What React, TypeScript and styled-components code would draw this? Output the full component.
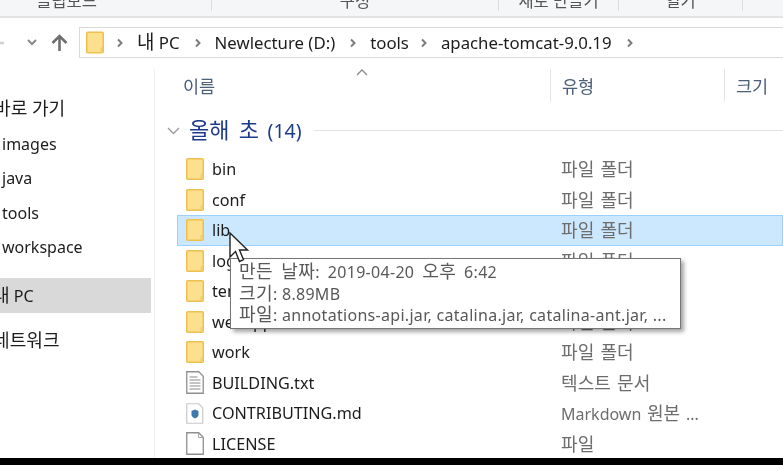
import React from "react";
import styled, { createGlobalStyle } from "styled-components";

const FONT = `"Noto Sans", "Noto Sans CJK KR", sans-serif`;

const Global = createGlobalStyle`
  html, body { margin: 0; padding: 0; background: #fff; }
  body { font-family: ${FONT}; }
`;

const Page = styled.div`
  position: relative;
  width: 783px;
  height: 465px;
  overflow: hidden;
  display: flex;
  flex-direction: column;
  background: #fff;
  color: #1c1c1c;
  filter: blur(0.3px);
`;

const Ribbon = styled.div`
  height: 16px;
  flex: none;
  display: grid;
  grid-template-columns: 212px 287px 120px 124px 40px;
  background: #f5f6f7;
  border-bottom: 2px solid #e2e3e4;
`;

const RibbonGroup = styled.div<{ $inset?: number }>`
  height: 11px;
  overflow: hidden;
  display: flex;
  justify-content: center;
  align-items: flex-end;
  font-size: 16.5px;
  line-height: 20px;
  color: #555;
  border-right: 1px solid #dcdddf;
  padding-right: ${(p) => p.$inset ?? 0}px;
  box-sizing: border-box;
`;

const NavBar = styled.div`
  height: 31px;
  margin-top: 9px;
  flex: none;
  display: flex;
  align-items: center;
`;

const NavButtons = styled.div`
  width: 79px;
  flex: none;
  display: flex;
  align-items: center;
  padding-left: 25px;
  gap: 14px;
  box-sizing: border-box;
  overflow: hidden;
`;

const BackArrow = styled.svg`
  margin-left: -37px;
  margin-right: 8px;
`;

const AddressBar = styled.div`
  flex: 1;
  height: 100%;
  box-sizing: border-box;
  border: 1px solid #d9d9d9;
  border-right: none;
  display: flex;
  align-items: center;
  padding-left: 6px;
  font-size: 16.8px;
  white-space: nowrap;
`;

const Crumb = styled.span<{ $left?: number; $right?: number }>`
  display: flex;
  margin: 0 ${(p) => p.$right ?? 13}px 0 ${(p) => p.$left ?? 13}px;
`;

const Body = styled.div`
  flex: 1;
  min-height: 0;
  display: grid;
  grid-template-columns: 155px 1fr;
  padding-top: 11px;
`;

const Sidebar = styled.div`
  border-right: 1px solid #f0f0f0;
  overflow: hidden;
  padding-top: 20px;
  display: flex;
  flex-direction: column;
`;

const SideItem = styled.div<{ $active?: boolean; $h?: number; $top?: number }>`
  height: ${(p) => p.$h ?? 34.5}px;
  margin-top: ${(p) => p.$top ?? 0}px;
  width: 151px;
  flex: none;
  display: flex;
  align-items: center;
  padding-left: 2px;
  box-sizing: border-box;
  font-size: 16px;
  white-space: nowrap;
  background: ${(p) => (p.$active ? "#d9d9d9" : "transparent")};
`;

const ClipLead = styled.span<{ $cut: number }>`
  margin-left: -${(p) => p.$cut}px;
  padding-top: 2px;
`;

const Main = styled.div`
  position: relative;
  min-width: 0;
`;

const HeaderRow = styled.div`
  height: 33px;
  display: grid;
  grid-template-columns: 396px 174px 1fr;
  font-size: 17.5px;
  color: #4c607a;
`;

const HeaderCell = styled.div<{ $pad: number }>`
  display: flex;
  align-items: center;
  padding-left: ${(p) => p.$pad}px;
  border-right: 1px solid #e5e5e5;
  box-sizing: border-box;
  &:last-child { border-right: none; }
`;

const SortCaret = styled.svg`
  position: absolute;
  left: 201px;
  top: 0;
`;

const GroupHeader = styled.div`
  height: 29px;
  margin-top: 14px;
  display: flex;
  align-items: center;
  padding-left: 12px;
  gap: 9px;
  font-size: 19.5px;
  word-spacing: 3.5px;
  color: #1e3a8a;
  white-space: nowrap;
`;

const GroupLine = styled.div`
  flex: 1;
  height: 1px;
  margin-left: 3px;
  background: #e2e2e2;
`;

const Rows = styled.div`
  margin-top: 9px;
  margin-left: 22px;
`;

const Row = styled.div<{ $selected?: boolean }>`
  height: 30.5px;
  box-sizing: border-box;
  display: grid;
  grid-template-columns: 384px 1fr;
  align-items: center;
  font-size: 16.2px;
  white-space: nowrap;
  background: ${(p) => (p.$selected ? "#cce8ff" : "transparent")};
  box-shadow: ${(p) => (p.$selected ? "inset 0 0 0 1px #99d1ff" : "none")};
`;

const NameCell = styled.div`
  display: flex;
  align-items: center;
  padding-left: 9px;
  gap: 8px;
`;

const TypeCell = styled.div`
  color: #6d6d6d;
  font-size: 16px;
  word-spacing: 1.5px;
  padding-top: 2px;
`;

const Tooltip = styled.div`
  position: absolute;
  left: 230px;
  top: 258px;
  width: 451px;
  height: 71px;
  box-sizing: border-box;
  background: #fff;
  border: 1px solid #767676;
  box-shadow: 3px 3px 4px rgba(0, 0, 0, 0.35);
  padding: 3px 8px 0;
  font-size: 16px;
  letter-spacing: 0.3px;
  line-height: 21.5px;
  color: #585858;
  white-space: nowrap;
`;

const TooltipLine = styled.div<{ $wide?: boolean }>`
  word-spacing: ${(p) => (p.$wide ? 3.5 : 0)}px;
`;

const Cursor = styled.svg`
  position: absolute;
  left: 229px;
  top: 232px;
`;

const Footer = styled.div`
  height: 7px;
  flex: none;
  background: #000;
`;

// the reference's Korean glyphs run larger than its latin text
const Ko = styled.span`
  font-size: 1.13em;
  line-height: 1;
`;

const Mixed = ({ text }: { text: string }) => (
  <>
    {text.split(/([\uac00-\ud7a3]+(?: [\uac00-\ud7a3]+)*)/).map((part, i) =>
      i % 2 ? <Ko key={i}>{part}</Ko> : part
    )}
  </>
);

const FolderIcon = ({ w = 18, h = 22 }: { w?: number; h?: number }) => (
  <svg width={w} height={h} viewBox="0 0 18 22" style={{ flex: "none" }}>
    <rect x="0.75" y="0.75" width="16.5" height="20.5" rx="1" fill="#fde08e" stroke="#eec04f" strokeWidth="1.5" />
    <path d="M15.2 21v-4.5q.8-1.5 1.6 0V21" fill="#fff3c9" stroke="#eec04f" />
  </svg>
);

const TextIcon = () => (
  <svg width="18" height="23" viewBox="0 0 18 23" style={{ flex: "none" }}>
    <path d="M.75.75h12l4.5 4.5v17H.75z" fill="#fff" stroke="#8f8f8f" strokeWidth="1.3" />
    <path d="M3.5 6h8M3.5 9h11M3.5 12h11M3.5 15h11M3.5 18h11" stroke="#8c8c8c" strokeWidth="1.1" />
  </svg>
);

const MdIcon = () => (
  <svg width="18" height="21" viewBox="0 0 18 21" style={{ flex: "none" }}>
    <path d="M.75.75h12l4 4v15.5h-16z" fill="#fff" stroke="#c9c9c9" strokeWidth="1.2" />
    <path d="M5.5 8l3.5-1.5L12.5 8v3.5q0 2.5-3.5 4-3.5-1.5-3.5-4z" fill="#3f78ab" />
  </svg>
);

const BlankIcon = () => (
  <svg width="18" height="23" viewBox="0 0 18 23" style={{ flex: "none" }}>
    <path d="M.75.75h12l4.5 4.5v17H.75z" fill="#fff" stroke="#8f8f8f" strokeWidth="1.3" />
    <path d="M12.5 1v4.5H17" fill="none" stroke="#a8a8a8" />
  </svg>
);

const Chevron = () => (
  <svg width="8" height="10" viewBox="0 0 8 10" style={{ flex: "none" }}>
    <path d="M2 1.5L5.5 5 2 8.5" fill="none" stroke="#7c7c7c" strokeWidth="2" />
  </svg>
);

const rows = [
  { name: "bin", type: "파일 폴더", icon: <FolderIcon /> },
  { name: "conf", type: "파일 폴더", icon: <FolderIcon /> },
  { name: "lib", type: "파일 폴더", icon: <FolderIcon />, selected: true },
  { name: "logs", type: "파일 폴더", icon: <FolderIcon /> },
  { name: "temp", type: "파일 폴더", icon: <FolderIcon /> },
  { name: "webapps", type: "파일 폴더", icon: <FolderIcon /> },
  { name: "work", type: "파일 폴더", icon: <FolderIcon /> },
  { name: "BUILDING.txt", type: "텍스트 문서", icon: <TextIcon /> },
  { name: "CONTRIBUTING.md", type: "Markdown 원본 ...", icon: <MdIcon /> },
  { name: "LICENSE", type: "파일", icon: <BlankIcon /> },
];

const App = () => (
  <Page>
    <Global />
    <Ribbon>
      <RibbonGroup $inset={78}>클립보드</RibbonGroup>
      <RibbonGroup>구성</RibbonGroup>
      <RibbonGroup>새로 만들기</RibbonGroup>
      <RibbonGroup>열기</RibbonGroup>
    </Ribbon>
    <NavBar>
      <NavButtons>
        <BackArrow width="17" height="18" viewBox="0 0 17 18">
          <path d="M16 9H2M9 2L2 9l7 7" fill="none" stroke="#d0d0d0" strokeWidth="2.6" />
        </BackArrow>
        <svg width="10" height="7" viewBox="0 0 10 7">
          <path d="M1 1l4 4 4-4" fill="none" stroke="#8a8a8a" strokeWidth="2" />
        </svg>
        <svg width="17" height="18" viewBox="0 0 17 18">
          <path d="M8.5 17V2M1.5 9l7-7 7 7" fill="none" stroke="#6f6f6f" strokeWidth="2.6" />
        </svg>
      </NavButtons>
      <AddressBar>
        <FolderIcon w={18} h={23} />
        <Crumb $left={12} $right={13}>
          <Chevron />
        </Crumb>
        <span>
          <Mixed text="내 PC" />
        </span>
        <Crumb $left={14}>
          <Chevron />
        </Crumb>
        <span>Newlecture (D:)</span>
        <Crumb $left={14}>
          <Chevron />
        </Crumb>
        <span>tools</span>
        <Crumb $left={11}>
          <Chevron />
        </Crumb>
        <span>apache-tomcat-9.0.19</span>
        <Crumb $left={14}>
          <Chevron />
        </Crumb>
      </AddressBar>
    </NavBar>
    <Body>
      <Sidebar>
        <SideItem $h={38}>
          <ClipLead $cut={8}>
            <Mixed text="바로 가기" />
          </ClipLead>
        </SideItem>
        <SideItem $h={34}>images</SideItem>
        <SideItem>java</SideItem>
        <SideItem>tools</SideItem>
        <SideItem>workspace</SideItem>
        <SideItem $active $h={35} $top={13}>
          <ClipLead $cut={9}>
            <Mixed text="내 PC" />
          </ClipLead>
        </SideItem>
        <SideItem $h={54}>
          <ClipLead $cut={9}>
            <Mixed text="네트워크" />
          </ClipLead>
        </SideItem>
      </Sidebar>
      <Main>
        <HeaderRow>
          <HeaderCell $pad={28}>이름</HeaderCell>
          <HeaderCell $pad={11}>유형</HeaderCell>
          <HeaderCell $pad={11}>크기</HeaderCell>
        </HeaderRow>
        <SortCaret width="12" height="7" viewBox="0 0 12 7">
          <path d="M1 6l5-5 5 5" fill="none" stroke="#8a8a8a" strokeWidth="1.3" />
        </SortCaret>
        <GroupHeader>
          <svg width="13" height="8" viewBox="0 0 13 8">
            <path d="M1 1l5.5 5.5L12 1" fill="none" stroke="#9a9a9a" strokeWidth="1.3" />
          </svg>
          <span>
            <Mixed text="올해 초" /> (14)
          </span>
          <GroupLine />
        </GroupHeader>
        <Rows>
          {rows.map((r) => (
            <Row key={r.name} $selected={r.selected}>
              <NameCell>
                {r.icon}
                <span>{r.name}</span>
              </NameCell>
              <TypeCell>
                <Mixed text={r.type} />
              </TypeCell>
            </Row>
          ))}
        </Rows>
      </Main>
    </Body>
    <Footer />
    <Tooltip>
      <TooltipLine $wide>
        <Mixed text="만든 날짜: 2019-04-20 오후 6:42" />
      </TooltipLine>
      <TooltipLine>
        <Mixed text="크기: 8.89MB" />
      </TooltipLine>
      <TooltipLine>
        <Mixed text="파일: annotations-api.jar, catalina.jar, catalina-ant.jar, ..." />
      </TooltipLine>
    </Tooltip>
    <Cursor width="20" height="34" viewBox="0 0 20 34">
      <path d="M1 1v24l5.5-5.5 4 10 4-1.8-4-9.7h8z" fill="#fff" stroke="#222" strokeWidth="1.4" />
    </Cursor>
  </Page>
);

export default App;
